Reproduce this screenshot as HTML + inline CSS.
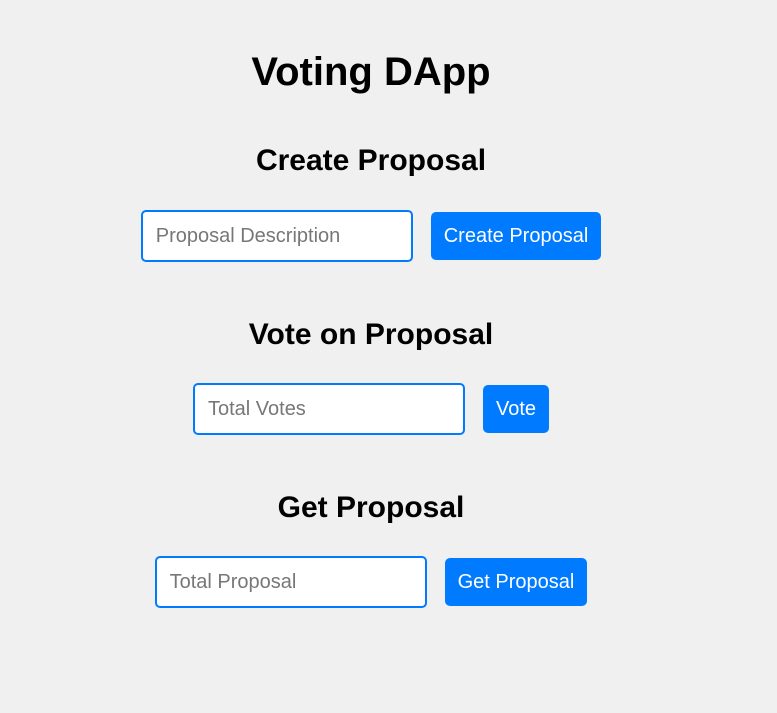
<!DOCTYPE html>
<html><head><style>
body{margin:0;background:#f0f0f0;font-family:"Liberation Sans",Arial,sans-serif;width:777px;height:713px;position:relative;overflow:hidden}
.c{position:absolute;left:0;width:742px;text-align:center}
h1{margin:0;font-size:40px;font-weight:bold;line-height:46px}
h2{margin:0;font-size:30px;font-weight:bold;line-height:34px}
.row{position:absolute;left:0;width:742px;display:flex;justify-content:center;align-items:center;gap:18px}
input{box-sizing:border-box;width:272px;height:52px;border:2px solid #007bff;border-radius:5px;background:#fff;font-family:"Liberation Sans",Arial,sans-serif;font-size:20px;padding:0 13px;outline:none}
input::placeholder{color:#777}
button{height:48px;border:none;border-radius:5px;background:#007bff;color:#fff;font-family:"Liberation Sans",Arial,sans-serif;font-size:20px;padding:0 13px}
</style></head><body>
<div class="c" style="top:49px"><h1>Voting DApp</h1></div>
<div class="c" style="top:144px"><h2>Create Proposal</h2></div>
<div class="row" style="top:210px"><input placeholder="Proposal Description"><button>Create Proposal</button></div>
<div class="c" style="top:318px"><h2>Vote on Proposal</h2></div>
<div class="row" style="top:383px"><input placeholder="Total Votes"><button>Vote</button></div>
<div class="c" style="top:491px"><h2>Get Proposal</h2></div>
<div class="row" style="top:556px"><input placeholder="Total Proposal"><button>Get Proposal</button></div>
</body></html>
